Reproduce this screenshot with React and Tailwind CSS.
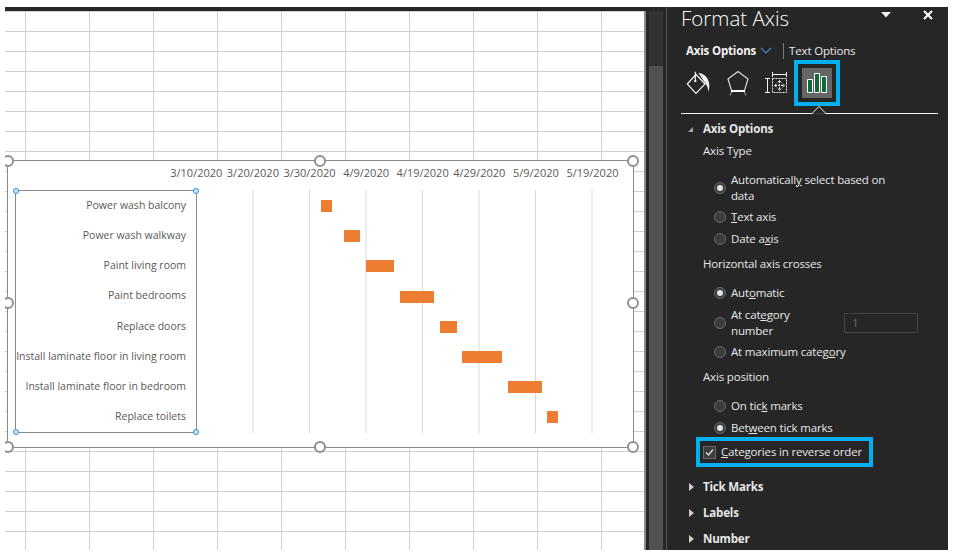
import React from "react";

const tasks = [
  { name: "Power wash balcony", x: 321, w: 11 },
  { name: "Power wash walkway", x: 344, w: 16 },
  { name: "Paint living room", x: 366, w: 28 },
  { name: "Paint bedrooms", x: 400, w: 34 },
  { name: "Replace doors", x: 440, w: 17 },
  { name: "Install laminate floor in living room", x: 462, w: 40 },
  { name: "Install laminate floor in bedroom", x: 508, w: 34 },
  { name: "Replace toilets", x: 547, w: 11 },
];

const dates = ["3/10/2020", "3/20/2020", "3/30/2020", "4/9/2020", "4/19/2020", "4/29/2020", "5/9/2020", "5/19/2020"];

const BigHandle = ({ className }) => (
  <div className={"absolute w-[12px] h-[12px] rounded-full bg-white border-[2px] border-[#8f8f8f] " + className}></div>
);

const SmallHandle = ({ className }) => (
  <div className={"absolute w-[6px] h-[6px] rounded-full bg-[#cfe6fb] border border-[#2a8fe6] " + className}></div>
);

const Chart = () => (
  <div className="absolute left-[2px] top-[149px] w-[627px] h-[288px] border border-[#8a8a8a] bg-white text-[11px] text-[#595959] font-['Open_Sans',sans-serif]">
    <BigHandle className="-left-[6px] -top-[6px]" />
    <BigHandle className="left-[306px] -top-[6px]" />
    <BigHandle className="-right-[6px] -top-[6px]" />
    <BigHandle className="-left-[6px] top-[136px]" />
    <BigHandle className="-right-[6px] top-[136px]" />
    <BigHandle className="-left-[6px] -bottom-[6px]" />
    <BigHandle className="left-[306px] -bottom-[6px]" />
    <BigHandle className="-right-[6px] -bottom-[6px]" />

    <div className="mt-[3px] ml-[160px] h-[18px] grid grid-cols-[repeat(8,56.6px)] items-center">
      {dates.map((d) => (
        <div key={d} className="text-center whitespace-nowrap leading-[18px]">{d}</div>
      ))}
    </div>

    <div className="mt-[8px] ml-[7px] flex">
      <div className="relative w-[182px] h-[243px] border border-[#8a8a8a] text-[10.5px]">
        <SmallHandle className="-left-[3px] -top-[3px]" />
        <SmallHandle className="-right-[3px] -top-[3px]" />
        <SmallHandle className="-left-[3px] -bottom-[3px]" />
        <SmallHandle className="-right-[3px] -bottom-[3px]" />
        <div className="-mt-[0.4px]">
          {tasks.map((t) => (
            <div key={t.name} className="h-[30.2px] flex items-center justify-end pr-[10px] whitespace-nowrap">
              {t.name}
            </div>
          ))}
        </div>
      </div>
      <div className="w-[396px] h-[243px] pt-px bg-[linear-gradient(90deg,#d9d9d9_1px,transparent_1px)] bg-[size:56.5px_100%] bg-[position:-1px_0px]">
        {tasks.map((t) => (
          <div key={t.name} className="h-[30.2px] flex items-center">
            <div className="h-[12px] bg-[#ed7d31]" style={{ marginLeft: t.x - 197, width: t.w }}></div>
          </div>
        ))}
      </div>
    </div>
  </div>
);

const Radio = ({ checked }) => (
  <div className="shrink-0 w-[12px] h-[12px] rounded-full bg-[#3c3c3c] border border-[#6a6a6a] flex items-center justify-center">
    {checked && <div className="w-[6px] h-[6px] rounded-full bg-[#e6e6e6]"></div>}
  </div>
);

const RadioRow = ({ checked, className, children }) => (
  <div className={"flex items-center pl-[33px] gap-[5px] leading-[16px] " + className}>
    <Radio checked={checked} />
    <div>{children}</div>
  </div>
);

const Section = ({ className, children }) => (
  <div className={"flex items-center h-[20px] font-bold text-[#e6e6e6] " + className}>
    <svg width="22" height="10" viewBox="0 0 22 10" className="shrink-0">
      <path d="M8 1l5 4-5 4z" fill="#cfcfcf" />
    </svg>
    {children}
  </div>
);

const BucketIcon = () => (
  <svg width="26" height="26" viewBox="0 0 26 26" fill="none">
    <path d="M2.300 14L11 4.500 20 14l-9 9.300z" stroke="#f2f2f2" strokeWidth="1.200" />
    <path d="M10.300 1.700v9" stroke="#f2f2f2" strokeWidth="1.200" />
    <circle cx="10.300" cy="11" r="1.200" fill="#f2f2f2" />
    <path d="M13.500 3C19 3 24 8 24.300 15c.1 2.500-.3 4.800-1 7 0-3.500-1-6.500-3.300-9z" fill="#f2f2f2" />
  </svg>
);

const ShapeIcon = () => (
  <svg width="24" height="26" viewBox="0 0 24 26" fill="none">
    <path d="M12 1.500L22 9l-3.500 11.500h-13L2 9z" stroke="#d9d9d9" strokeWidth="1.200" />
    <path d="M5 21h14" stroke="#ffffff" strokeWidth="2" />
    <path d="M5.500 22l-1.500 3.500M18.500 22l1.500 3.500" stroke="#8a8a8a" strokeWidth="1.200" />
  </svg>
);

const SizeIcon = () => (
  <svg width="24" height="24" viewBox="0 0 24 24" fill="none" stroke="#f2f2f2" strokeWidth="1">
    <path d="M7.500 1v5M21.500 1v5M7.500 3.500h14" />
    <path d="M0 7.500h5M0 21.500h5M2.500 7.500v14" />
    <path d="M7.500 7.500h14v14h-14z" strokeDasharray="2 1" />
    <path d="M14.500 10v9M10 14.500h9" strokeDasharray="2 1" />
    <path d="M13 11.500l1.500-2 1.500 2M13 17.500l1.500 2 1.500-2M11.500 13l-2 1.500 2 1.500M17.500 13l2 1.500-2 1.500" />
  </svg>
);

const BarsIcon = () => (
  <svg width="22" height="22" viewBox="0 0 22 22" fill="#0e6b38" stroke="#ffffff" strokeWidth="1">
    <path d="M1.500 7.500h5v13h-5zM8.500 1.500h5v19h-5zM15.500 4.500h5v16h-5z" />
  </svg>
);

const Panel = () => (
  <div className="relative w-[281px] pl-[14px] bg-[#262626] text-[#e6e6e6] text-[11.5px] tracking-[-0.17px] font-['Open_Sans',sans-serif]">
    <div className="h-[24px] w-[257px] flex items-center justify-between">
      <span className="pb-[2px] text-[20.5px] tracking-normal font-light text-white leading-[24px]">Format Axis</span>
      <div className="flex items-center gap-[32px] mr-[5px] mb-[8px]">
        <svg width="10" height="6" viewBox="0 0 10 6"><path d="M0 0h10L5 5.500z" fill="#f2f2f2" /></svg>
        <svg width="10" height="10" viewBox="0 0 10 10"><path d="M1 1l8 8M9 1l-8 8" stroke="#ffffff" strokeWidth="2" /></svg>
      </div>
    </div>

    <div className="mt-[10px] h-[19px] pl-[5px] flex items-center">
      <span className="font-bold text-[#f2f2f2]">Axis Options</span>
      <svg width="12" height="7" viewBox="0 0 12 7" fill="none" className="ml-[4px]"><path d="M1 1l5 5 5-5" stroke="#3e8fd0" strokeWidth="1.200" /></svg>
      <div className="ml-[11px] w-px h-[16px] bg-[#7a7a7a]"></div>
      <span className="ml-[5px]">Text Options</span>
    </div>

    <div className="h-[46px] flex items-center">
      <div className="ml-[4px] w-[41px] flex"><BucketIcon /></div>
      <div className="w-[39px] flex"><ShapeIcon /></div>
      <div className="w-[29px] flex"><SizeIcon /></div>
      <div className="w-[46px] h-[46px] border-[4px] border-[#00b0f0] p-[4px] flex">
        <div className="w-[30px] h-[30px] bg-[#666666] flex items-center justify-center"><BarsIcon /></div>
      </div>
    </div>

    <div className="relative mt-[7px] w-[257px] h-px bg-[#f2f2f2]">
      <svg width="16" height="8" viewBox="0 0 16 8" fill="none" className="absolute left-[130px] -top-[7px]">
        <path d="M0 7.500h1L8 .5l7 7h1" fill="#262626" />
        <path d="M1 7.500L8 .5l7 7" stroke="#f2f2f2" />
        <path d="M2 8h12" stroke="#262626" strokeWidth="1.500" />
      </svg>
    </div>

    <div className="mt-[5px] flex items-center h-[20px] font-bold">
      <svg width="22" height="8" viewBox="0 0 22 8" className="shrink-0"><path d="M7 7l5-5v5z" fill="#a6a6a6" /></svg>
      Axis Options
    </div>

    <div className="mt-[2px] h-[20px] pl-[22px] flex items-center">Axis Type</div>
    <RadioRow checked className="mt-[11px] h-[32px]">
      <div className="w-[175px]">Automaticall<u>y</u> select based on data</div>
    </RadioRow>
    <RadioRow className="mt-[2px] h-[22px]"><u>T</u>ext axis</RadioRow>
    <RadioRow className="h-[22px]">Date a<u>x</u>is</RadioRow>

    <div className="mt-[4px] h-[20px] pl-[22px] flex items-center">Horizontal axis crosses</div>
    <RadioRow checked className="mt-[8px] h-[22px]">Aut<u>o</u>matic</RadioRow>
    <RadioRow className="mt-[3px] h-[32px]">
      <div className="flex items-center">
        <div className="w-[113px]">At cat<u>e</u>gory<br />number</div>
        <div className="w-[74px] h-[20px] border border-[#444444] pl-[7px] leading-[18px] text-[#6e6e6e]">1</div>
      </div>
    </RadioRow>
    <RadioRow className="mt-[2px] h-[22px]">At maximum categ<u>o</u>ry</RadioRow>

    <div className="mt-[4px] h-[20px] pl-[22px] flex items-center">Axis position</div>
    <RadioRow className="mt-[8px] h-[22px]">On tic<u>k</u> marks</RadioRow>
    <RadioRow checked className="h-[22px]">Bet<u>w</u>een tick marks</RadioRow>

    <div className="relative -mt-[2px] ml-[15px] w-[177px] h-[30px] border-[4px] border-[#00b0f0] flex items-center pl-[3px] gap-[5px]">
      <div className="w-[13px] h-[13px] bg-[#3c3c3c] border border-[#6a6a6a] flex items-center justify-center">
        <svg width="11" height="11" viewBox="0 0 11 11" fill="none"><path d="M2 5.500l2.500 2.500L9 2.500" stroke="#d9d9d9" strokeWidth="1.500" /></svg>
      </div>
      <span className="whitespace-nowrap"><u>C</u>ategories in reverse order</span>
    </div>

    <Section className="mt-[10px]">Tick Marks</Section>
    <Section className="mt-[6px]">Labels</Section>
    <Section className="mt-[6px]">Number</Section>
  </div>
);

const App = () => {
  return (
    <div className="w-[954px] h-[555px] bg-white pt-[7px] pl-[5px]">
      <div className="w-[943px] h-[543px] bg-[#262626] flex">
        <div className="relative mt-[4px] w-[641px] h-[539px] overflow-hidden border-r-[2px] border-[#8a8a8a] bg-white bg-[linear-gradient(#d0d0d0_1px,transparent_1px),linear-gradient(90deg,#d0d0d0_1px,transparent_1px)] bg-[size:64px_20px] bg-[position:20px_0px]">
          <Chart />
        </div>
        <div className="ml-[3px] mt-[4px] w-[14px] bg-[#333333] flex flex-col">
          <div className="mt-[55px] flex-1 bg-[#505050]"></div>
        </div>
        <div className="ml-[3px] w-px bg-[#555555]"></div>
        <Panel />
      </div>
    </div>
  );
};

export default App;
